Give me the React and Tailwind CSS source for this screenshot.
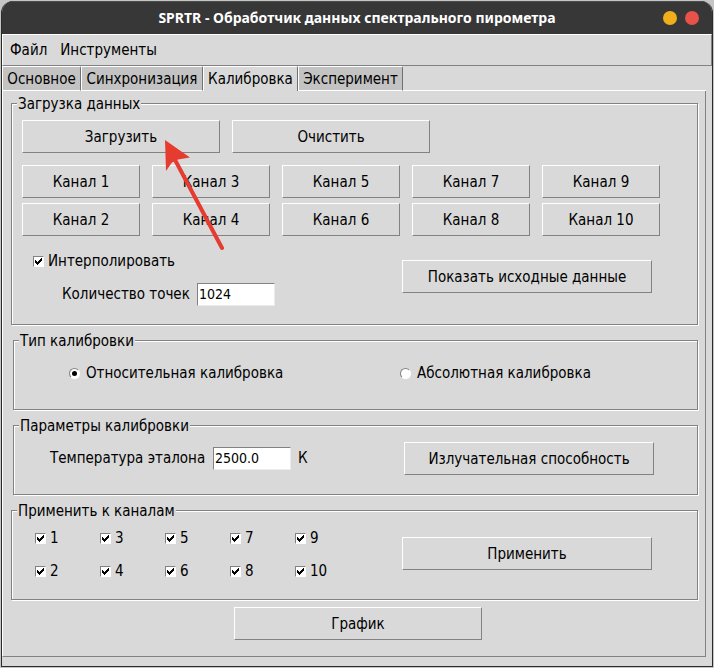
import { useState } from "react";

function Button({ className = "", children }) {
  return (
    <button
      type="button"
      className={`h-[33px] border border-t-white border-l-white border-r-[#828282] border-b-[#828282] bg-[#d9d9d9] leading-[18px] ${className}`}
    >
      {children}
    </button>
  );
}

function Group({ title, className = "", children }) {
  return (
    <fieldset
      className={`border border-[#828282] shadow-[inset_1px_1px_0_white,1px_1px_0_white] ${className}`}
    >
      <legend className="ml-[5px] h-[19px] bg-[#d9d9d9] px-px leading-5">{title}</legend>
      {children}
    </fieldset>
  );
}

function Check({ label, className = "" }) {
  const [on, setOn] = useState(true);
  return (
    <label className={`flex h-[18px] items-center gap-1 leading-[18px] ${className}`}>
      <span className="relative flex size-[11px] shrink-0">
        <input
          type="checkbox"
          checked={on}
          onChange={(e) => setOn(e.target.checked)}
          className="size-[11px] appearance-none border border-t-[#828282] border-l-[#828282] border-r-white border-b-white bg-white"
        />
        {on && (
          <svg viewBox="0 0 11 11" className="pointer-events-none absolute inset-0 size-[11px]" shapeRendering="crispEdges">
            <path d="M2 4h1v1h1v1h1v-1h1v-1h1v-1h1v-1h1v3h-1v1h-1v1h-1v1h-1v1h-1v-1h-1v-1h-1z" fill="#000" />
          </svg>
        )}
      </span>
      {label}
    </label>
  );
}

function Radio({ label, value, current, onPick, className = "" }) {
  return (
    <label className={`flex h-[18px] items-center gap-1.5 leading-[18px] ${className}`}>
      <span className="relative flex size-[11px] shrink-0">
        <input
          type="radio"
          name="calibration"
          checked={current === value}
          onChange={() => onPick(value)}
          className="size-[11px] appearance-none rounded-full border border-t-[#828282] border-l-[#828282] border-r-white border-b-white bg-white"
        />
        {current === value && (
          <span className="pointer-events-none absolute top-[3px] left-[3px] size-[5px] rounded-full bg-black" />
        )}
      </span>
      {label}
    </label>
  );
}

function Entry({ id, value }) {
  return (
    <input
      id={id}
      type="text"
      defaultValue={value}
      className="h-[23px] w-[78px] border border-t-[#828282] border-l-[#828282] border-r-[#ececec] border-b-[#ececec] bg-white px-px pb-0.5 text-[14px] leading-[18px] outline-none"
    />
  );
}

const tabs = [
  { name: "Основное", width: "w-[79px]" },
  { name: "Синхронизация", width: "w-[122px]" },
  { name: "Калибровка", width: "w-[95px]" },
  { name: "Эксперимент", width: "w-[105px]" },
];
const channels = [1, 3, 5, 7, 9, 2, 4, 6, 8, 10];

export default function App() {
  const [tab, setTab] = useState("Калибровка");
  const [mode, setMode] = useState("relative");

  return (
    <div className="bg-[#c4c6c4] p-px font-['DejaVu_Sans_Condensed','DejaVu_Sans',sans-serif] text-[15px] text-black">
      <div className="relative overflow-hidden rounded-t-xl border border-t-0 border-[#2b2b2b] bg-[#d9d9d9]">
        <header className="flex h-[33px] items-center bg-[#373737] px-[13px] shadow-[inset_0_1px_0_#4d4d4d]">
          <div className="w-9" />
          <h1 className="flex-1 text-center font-['Noto_Sans','Open_Sans',sans-serif] text-[14px] font-bold text-white">
            SPRTR - Обработчик данных спектрального пирометра
          </h1>
          <div className="flex w-9 justify-end gap-2">
            <button type="button" aria-label="Свернуть" className="size-[14px] rounded-full bg-[#f0ad1c]" />
            <button type="button" aria-label="Закрыть" className="size-[14px] rounded-full bg-[#e8524a]" />
          </div>
        </header>

        <nav className="flex h-8 items-center gap-[13px] border border-t-white border-l-white border-r-[#828282] border-b-[#828282] px-[7px] leading-[18px]">
          <button type="button">Файл</button>
          <button type="button">Инструменты</button>
        </nav>

        <div role="tablist" className="flex">
          {tabs.map(({ name, width }) => (
            <button
              key={name}
              type="button"
              role="tab"
              aria-selected={tab === name}
              onClick={() => setTab(name)}
              className={`h-[25px] rounded-tr-[2px] border-t border-r border-l border-t-white border-l-white border-r-[#707070] leading-[18px] ${width} ${
                tab === name ? "bg-[#d9d9d9] pb-px" : "border-b border-b-white bg-[#c3c3c3]"
              }`}
            >
              {name}
            </button>
          ))}
          <div className="mr-[6px] flex-1 border-b border-white" />
        </div>

        <main className="mr-[6px] mb-[9px] flex flex-col gap-[6px] border-r border-b border-l border-r-[#828282] border-b-[#828282] border-l-white pt-[3px] pr-[7px] pb-4 pl-2">
          <Group title="Загрузка данных" className="pb-[18px]">
            <div className="flex gap-3 pt-[7px] pl-[10px]">
              <Button className="w-[198px]">Загрузить</Button>
              <Button className="w-[198px]">Очистить</Button>
            </div>
            <div className="mt-3 grid grid-cols-[repeat(5,118px)] gap-x-3 gap-y-[5px] pl-[10px]">
              {channels.map((n) => (
                <Button key={n}>Канал {n}</Button>
              ))}
            </div>
            <div className="flex pl-[10px]">
              <div className="w-[380px] pt-4">
                <Check label="Интерполировать" className="pl-[11px]" />
                <div className="mt-[13px] flex items-center pl-10">
                  <label htmlFor="points" className="w-[135px]">Количество точек</label>
                  <Entry id="points" value="1024" />
                </div>
              </div>
              <Button className="mt-6 w-[250px]">Показать исходные данные</Button>
            </div>
          </Group>

          <Group title="Тип калибровки" className="ml-0.5 pb-[27px]">
            <div className="flex pt-[14px] pl-[55px]">
              <Radio
                label="Относительная калибровка"
                value="relative"
                current={mode}
                onPick={setMode}
                className="w-[331px]"
              />
              <Radio label="Абсолютная калибровка" value="absolute" current={mode} onPick={setMode} />
            </div>
          </Group>

          <Group title="Параметры калибровки" className="ml-0.5 pb-[19px]">
            <div className="flex items-center pt-[7px] pl-9">
              <div className="flex w-[354px] items-center">
                <label htmlFor="temperature" className="w-[163px]">Температура эталона</label>
                <Entry id="temperature" value="2500.0" />
                <span className="ml-[7px]">К</span>
              </div>
              <Button className="w-[250px]">Излучательная способность</Button>
            </div>
          </Group>

          <Group title="Применить к каналам" className="pb-[19px]">
            <div className="flex items-start pt-[9px] pl-[23px]">
              <div className="grid w-[367px] grid-cols-[repeat(5,65px)] gap-y-[15px]">
                {channels.map((n) => (
                  <Check key={n} label={n} />
                ))}
              </div>
              <Button className="mt-2 w-[250px]">Применить</Button>
            </div>
          </Group>

          <div className="flex pt-px pl-[223px]">
            <Button className="w-[248px]">График</Button>
          </div>
        </main>

        <svg
          viewBox="0 0 60 112"
          className="pointer-events-none absolute top-[138px] left-[162px] h-[112px] w-[60px]"
          fill="#e63c30"
        >
          <path d="M1 1L26 18.500L14 20.500L8 23.500L2 32z" />
          <path d="M10 19L58 109" stroke="#e63c30" strokeWidth="4" strokeLinecap="round" />
        </svg>
      </div>
    </div>
  );
}
